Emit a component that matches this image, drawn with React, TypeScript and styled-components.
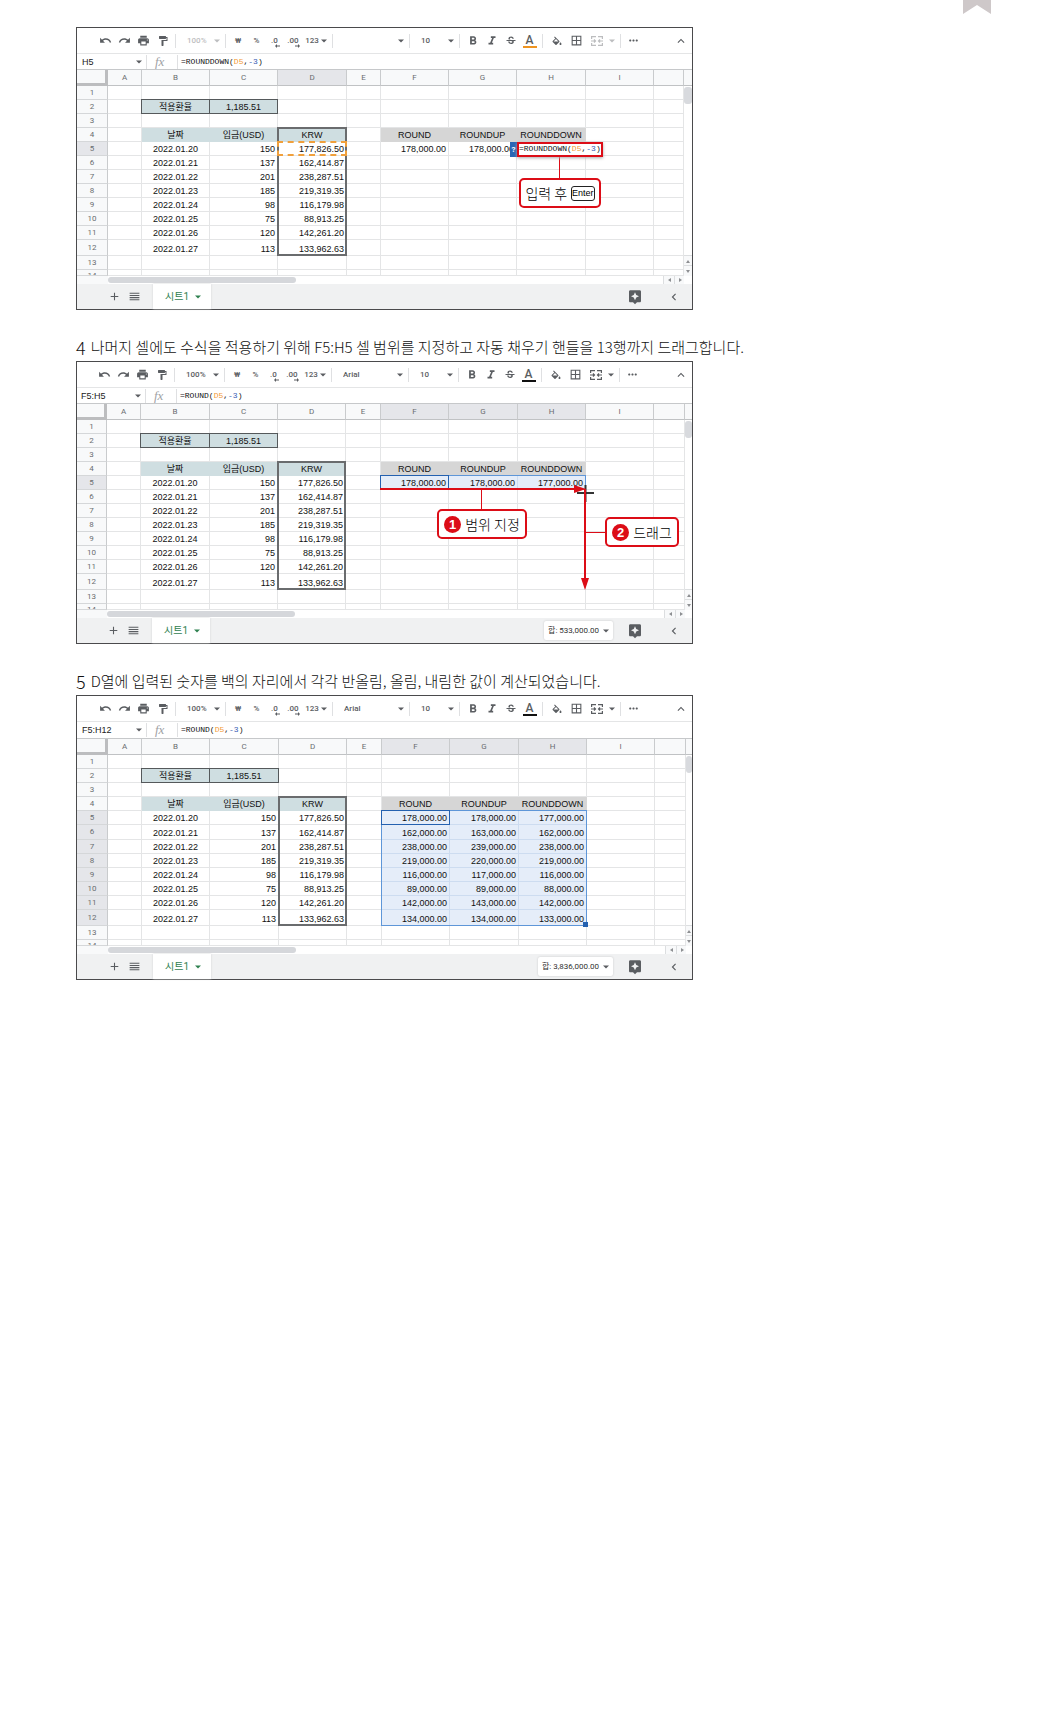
import React from 'react';
import styled, { createGlobalStyle } from 'styled-components';
import {
  MdUndo, MdRedo, MdPrint, MdFormatPaint, MdFormatBold, MdFormatItalic, MdStrikethroughS,
  MdBorderAll, MdMoreHoriz, MdExpandLess, MdAdd, MdReorder, MdChevronLeft, MdAssistant,
} from 'react-icons/md';

const SANS = '"Liberation Sans", "Noto Sans CJK KR", sans-serif';
const UI = 'Roboto, "Noto Sans CJK KR", sans-serif';
const MONO = '"Liberation Mono", monospace';
const RED = '#dc0d17';

const Global = createGlobalStyle`
  *, *::before, *::after { box-sizing: border-box; }
  body { margin: 0; background: #fff; color: #222; font-family: ${SANS}; }
  button, select, input { font: inherit; color: inherit; margin: 0; padding: 0; border: 0; background: none; }
`;

/* ---------- page ---------- */

const PageHeader = styled.header`
  display: flex;
  justify-content: flex-end;
  height: 27px;
  padding-right: 51px;
`;
const Bookmark = styled.button`
  display: block;
  width: 28px;
  height: 14px;
  svg { display: block; }
`;
const Main = styled.main`
  padding: 0 76px 48px;
`;
const Caption = styled.h2`
  display: flex;
  align-items: center;
  gap: 5px;
  height: 51px;
  margin: 0;
  padding-top: 22px;
  font: 300 15px/24px "Noto Sans CJK KR", sans-serif;
  color: #111;
  white-space: nowrap;
`;
const StepNumber = styled.span`
  font-size: 18px;
`;

/* ---------- sheet chrome ---------- */

const Panel = styled.section`
  max-width: 617px;
  border: 1px solid #4a4a4c;
  background: #fff;
`;
const Toolbar = styled.div<{ $inset: number }>`
  display: flex;
  align-items: center;
  height: 26px;
  padding: 0 2px 0 ${p => p.$inset}px;
  border-bottom: 1px solid #e4e5e6;
  font: 500 8px/12px ${UI};
  color: #5a5d61;
`;
const Divider = styled.span`
  width: 1px;
  height: 14px;
  margin: 0 3px;
  background: #dfe0e2;
`;
const ToolButton = styled.button<{ $width?: number; $faded?: boolean }>`
  position: relative;
  display: flex;
  flex: none;
  align-items: center;
  justify-content: center;
  gap: 2px;
  width: ${p => p.$width ?? 19}px;
  height: 20px;
  opacity: ${p => (p.$faded ? 0.4 : 1)};
`;
const MergeButton = styled(ToolButton)`
  justify-content: space-between;
  padding: 0 2px 0 5px;
`;
const DigitArrow = styled.svg`
  position: absolute;
  right: 3px;
  bottom: 3px;
`;
const Picker = styled.label<{ $width: number; $faded?: boolean }>`
  display: flex;
  flex: none;
  align-items: center;
  width: ${p => p.$width}px;
  padding: 0 2px 0 8px;
  opacity: ${p => (p.$faded ? 0.4 : 1)};
  select { flex: 1; min-width: 0; appearance: none; }
`;
const InkButton = styled(ToolButton)<{ $ink: string }>`
  flex-direction: column;
  gap: 0;
  font-size: 12px;
  &::after { content: ""; width: 14px; height: 2px; background: ${p => p.$ink}; }
`;
const Spacer = styled.span`
  flex: 1;
`;
const FormulaBar = styled.div<{ $height: number; $inset: number }>`
  display: flex;
  align-items: center;
  height: ${p => p.$height}px;
  padding-left: ${p => p.$inset}px;
  border-bottom: 1px solid #c6c8ca;
  font: 9px/12px ${SANS};
`;
const NameBox = styled.label`
  display: flex;
  align-items: center;
  width: 61px;
  padding-right: 1px;
  input { flex: 1; min-width: 0; outline: 0; }
`;
const FxMark = styled.span`
  width: 24px;
  padding-left: 5px;
  font: italic 13px/14px "Liberation Serif", serif;
  color: #a0a2a5;
`;
const Code = styled.code`
  font: 8px/12px ${MONO};
  color: #111;
  white-space: nowrap;
`;
const RefToken = styled.span`
  color: #f29b38;
`;
const NumberToken = styled.span`
  color: #3b5fb5;
`;

/* ---------- grid ---------- */

const GridArea = styled.div`
  position: relative;
  display: flex;
`;
const Grid = styled.table`
  flex: 1;
  width: 0;
  table-layout: fixed;
  border-collapse: separate;
  border-spacing: 0;
  font: 9px/11px ${SANS};
  color: #111;
`;
const HeadCell = styled.th<{ $on?: boolean }>`
  height: 16px;
  padding: 0;
  border-right: 1px solid #c9cbcd;
  border-bottom: 1px solid #c0c2c4;
  background: ${p => (p.$on ? '#e5e6ea' : '#f8f9fa')};
  font: 400 8px/14px ${UI};
  color: #6a6d70;
`;
const Corner = styled.td`
  padding: 0;
  border-right: 3px solid #bcbdbf;
  border-bottom: 3px solid #bcbdbf;
  background: #f8f9fa;
`;
const RowHead = styled.th<{ $on?: boolean }>`
  padding: 0;
  border-right: 1px solid #c9cbcd;
  border-bottom: 1px solid #d5d7d9;
  background: ${p => (p.$on ? '#e5e6ea' : '#f8f9fa')};
  font: 400 8px/12px ${UI};
  color: #6a6d70;
`;
type Tone = 'plain' | 'teal' | 'grey' | 'picked';
const toneFill: Record<Tone, string> = { plain: '#fff', teal: '#cfdee1', grey: '#d6d6d6', picked: '#e5edf9' };
const toneLine: Record<Tone, string> = { plain: '#e4e5e6', teal: '#cfdee1', grey: '#d6d6d6', picked: '#cddcf0' };
const Cell = styled.td<{ $tone: Tone; $align: string }>`
  padding: 0 2px;
  border-right: 1px solid ${p => toneLine[p.$tone]};
  border-bottom: 1px solid ${p => toneLine[p.$tone]};
  background: ${p => toneFill[p.$tone]};
  text-align: ${p => p.$align};
  vertical-align: bottom;
  white-space: nowrap;
`;
const Row = styled.tr<{ $height: number }>`
  height: ${p => p.$height}px;
`;
const Clip = styled.div`
  height: 5px;
  overflow: hidden;
  line-height: 11px;
`;
const VScroll = styled.div<{ $width: number }>`
  display: flex;
  flex-direction: column;
  width: ${p => p.$width}px;
  background: #fff;
  &::before { content: ""; height: 16px; background: #f8f9fa; border-bottom: 1px solid #c0c2c4; }
`;
const VThumb = styled.span`
  height: 17px;
  margin-top: 1px;
  border-radius: 3px;
  background: #d8dade;
`;
const StepButton = styled.button<{ $w?: number; $h?: number }>`
  display: flex;
  flex: none;
  align-items: center;
  justify-content: center;
  width: ${p => (p.$w ? p.$w + 'px' : '100%')};
  height: ${p => (p.$h ? p.$h + 'px' : '100%')};
  border: 0 solid #dcdee0;
  border-width: ${p => (p.$h ? '1px 0 0' : '0 0 0 1px')};
  background: #f8f9fa;
`;
const HScroll = styled.div<{ $lead: number; $trail: number }>`
  display: flex;
  align-items: center;
  height: 8px;
  padding-right: ${p => p.$trail}px;
  background: linear-gradient(#f8f9fa, #f8f9fa) left / ${p => p.$lead}px 100% no-repeat, #fff;
  padding-left: ${p => p.$lead}px;
`;
const HThumb = styled.span`
  width: 188px;
  height: 6px;
  border-radius: 3px;
  background: #d5d7db;
`;
const Footer = styled.footer<{ $inset: number }>`
  display: flex;
  align-items: center;
  height: 25px;
  padding: 0 8px 0 ${p => p.$inset}px;
  background: #f0f1f2;
  color: #5a5d61;
`;
const FootButton = styled.button`
  display: flex;
  align-items: center;
  justify-content: center;
  width: 20px;
  height: 20px;
`;
const SheetTab = styled.button`
  display: flex;
  align-items: center;
  justify-content: center;
  gap: 6px;
  width: 58px;
  height: 25px;
  margin-left: 9px;
  padding-left: 2px;
  background: #fff;
  box-shadow: 0 0 2px #d0d2d4;
  font: 400 10px/14px ${UI};
  color: #2f8150;
`;
const SumButton = styled.button`
  display: flex;
  align-items: center;
  gap: 4px;
  height: 19px;
  margin-right: 12px;
  padding: 0 4px;
  border-radius: 2px;
  background: #fff;
  box-shadow: 0 0 2px #c2c4c6;
  font: 8px/12px ${UI};
  color: #333;
`;
const ExploreButton = styled(FootButton)`
  margin-right: 19px;
`;

/* ---------- things drawn over the grid ---------- */

const RangeBox = styled.div<{ $line: string }>`
  position: absolute;
  border: ${p => p.$line};
  pointer-events: none;
`;
const FillHandle = styled.span`
  position: absolute;
  right: -2px;
  bottom: -2px;
  width: 5px;
  height: 5px;
  background: #2461b0;
`;
const Editor = styled.div`
  position: absolute;
  left: 440px;
  top: 72px;
  display: flex;
  align-items: center;
  width: 86px;
  height: 15px;
  padding-bottom: 2px;
  border: 2px solid ${RED};
  background: #fff;
  box-shadow: 0 1px 3px #aaa;
`;
const HelpBadge = styled.button`
  position: absolute;
  left: 433px;
  top: 72px;
  width: 7px;
  height: 15px;
  background: #2a66b4;
  color: #fff;
  font: 700 8px/15px ${UI};
`;
const Callout = styled.div<{ $x: number; $y: number; $width: number }>`
  position: absolute;
  left: ${p => p.$x}px;
  top: ${p => p.$y}px;
  display: flex;
  align-items: center;
  justify-content: center;
  gap: 4px;
  width: ${p => p.$width}px;
  height: 30px;
  border: 2px solid ${RED};
  border-radius: 5px;
  background: #fff;
  font: 300 14px/20px "Noto Sans CJK KR", sans-serif;
  color: #000;
  white-space: nowrap;
`;
const KeyCap = styled.kbd`
  height: 15px;
  border: 1px solid #222;
  border-radius: 3px;
  font: 9px/13px ${SANS};
`;
const Bullet = styled.span`
  width: 17px;
  height: 17px;
  border-radius: 50%;
  background: ${RED};
  color: #fff;
  font: 700 13px/17px ${SANS};
  text-align: center;
`;
const Lines = styled.svg`
  position: absolute;
  left: 0;
  top: 0;
  overflow: visible;
  pointer-events: none;
`;

/* ---------- small drawings ---------- */

const Caret = ({ color = '#5a5d61' }: { color?: string }) => (
  <svg width="6" height="4" viewBox="0 0 6 4" aria-hidden="true"><path d="M0 .5h6L3 3.5z" fill={color} /></svg>
);
const stepPaths = { up: 'M0 4h4L2 1z', down: 'M0 1h4L2 4z', left: 'M4 0v4L1 2z', right: 'M1 0v4l3-2z' };
const StepArrow = ({ to }: { to: keyof typeof stepPaths }) => (
  <svg width="4" height="4" viewBox="0 0 4 4" aria-hidden="true"><path d={stepPaths[to]} fill="#8d8f92" /></svg>
);
const MergeIcon = () => (
  <svg width="12" height="10" viewBox="0 0 12 10" fill="none" stroke="currentColor" strokeWidth="1.2" aria-hidden="true">
    <path d="M.6 3V.6H5M7 .6h4.400V3M.6 7v2.400H5M7 9.400h4.400V7M0 5h4M12 5H8M3 3.500 4.500 5 3 6.500M9 3.500 7.500 5 9 6.500" />
  </svg>
);
const BucketIcon = () => (
  <svg width="12" height="12" viewBox="0 -3 24 24" fill="currentColor" aria-hidden="true">
    <path d="M16.56 8.94L7.62 0 6.21 1.41l2.38 2.38-5.15 5.15c-.59.59-.59 1.54 0 2.12l5.5 5.5c.29.29.68.44 1.06.44s.77-.15 1.06-.44l5.5-5.5c.59-.58.59-1.53 0-2.12zM5.21 10L10 5.21 14.79 10H5.21zM19 11.5s-2 2.17-2 3.5c0 1.1.9 2 2 2s2-.9 2-2c0-1.33-2-3.5-2-3.5z" />
  </svg>
);

/* ---------- data ---------- */

const letters = ['A', 'B', 'C', 'D', 'E', 'F', 'G', 'H', 'I', ''];
const deposits = [
  ['2022.01.20', '150', '177,826.50'],
  ['2022.01.21', '137', '162,414.87'],
  ['2022.01.22', '201', '238,287.51'],
  ['2022.01.23', '185', '219,319.35'],
  ['2022.01.24', '98', '116,179.98'],
  ['2022.01.25', '75', '88,913.25'],
  ['2022.01.26', '120', '142,261.20'],
  ['2022.01.27', '113', '133,962.63'],
];
const rounded = [
  ['178,000.00', '178,000.00', '177,000.00'],
  ['162,000.00', '163,000.00', '162,000.00'],
  ['238,000.00', '239,000.00', '238,000.00'],
  ['219,000.00', '220,000.00', '219,000.00'],
  ['116,000.00', '117,000.00', '116,000.00'],
  ['89,000.00', '89,000.00', '88,000.00'],
  ['142,000.00', '143,000.00', '142,000.00'],
  ['134,000.00', '134,000.00', '133,000.00'],
];

interface SheetSpec {
  label: string;
  name: string;
  fn: string;
  editing?: boolean;
  ink: string;
  inset: number;
  formulaHeight: number;
  cols: number[];
  rows: number[];
  scroll: number;
  results: string[][];
  headOn: string[];
  rowsOn: number[];
  picked: boolean;
  sum?: string;
}

const rowSet = (sixth: number) => [14, 14, 14, 14, 14, sixth, 14, 14, 14, 14, 14, 16, 14, 6];

const sheets: SheetSpec[] = [
  {
    label: 'ROUNDDOWN', name: 'H5', fn: 'ROUNDDOWN', editing: true, ink: '#ee9420', inset: 19, formulaHeight: 16,
    cols: [31, 34, 68, 68, 69, 34, 68, 68, 69, 68], rows: rowSet(14), scroll: 8,
    results: [['178,000.00', '178,000.00', '']], headOn: ['D'], rowsOn: [5], picked: false,
  },
  {
    label: 'F5:H5', name: 'F5:H5', fn: 'ROUND', ink: '#111', inset: 18, formulaHeight: 16,
    cols: [30, 34, 69, 68, 68, 35, 68, 69, 68, 68], rows: rowSet(14), scroll: 7,
    results: rounded.slice(0, 1), headOn: ['F', 'G', 'H'], rowsOn: [5], picked: true, sum: '합: 533,000.00',
  },
  {
    label: 'F5:H12', name: 'F5:H12', fn: 'ROUND', ink: '#111', inset: 19, formulaHeight: 17,
    cols: [31, 34, 68, 69, 68, 35, 68, 69, 68, 68], rows: rowSet(15), scroll: 6,
    results: rounded, headOn: ['F', 'G', 'H'], rowsOn: [5, 6, 7, 8, 9, 10, 11, 12], picked: true, sum: '합: 3,836,000.00',
  },
];

const total = (list: number[]) => list.reduce((a, b) => a + b, 0);

/* Rectangle on the grid lines around a block of cells; column 1 is A, row 1 is the first row. */
function around(s: SheetSpec, c1: number, r1: number, c2: number, r2: number): React.CSSProperties {
  const left = total(s.cols.slice(0, c1)) - 1;
  const top = 16 + total(s.rows.slice(0, r1 - 1)) - 1;
  return {
    left, top,
    width: total(s.cols.slice(0, c2 + 1)) - left,
    height: 16 + total(s.rows.slice(0, r2)) - top,
  };
}

function cellAt(s: SheetSpec, row: number, col: string): { text: string; tone: Tone; align: string } {
  const blank = { text: '', tone: 'plain' as Tone, align: 'left' };
  if (row === 2 && col === 'B') return { text: '적용환율', tone: 'teal', align: 'center' };
  if (row === 2 && col === 'C') return { text: '1,185.51', tone: 'teal', align: 'center' };
  const left = 'BCD'.indexOf(col || '-');
  const right = 'FGH'.indexOf(col || '-');
  if (row === 4) {
    if (left >= 0) return { text: ['날짜', '입금(USD)', 'KRW'][left], tone: 'teal', align: 'center' };
    if (right >= 0) return { text: ['ROUND', 'ROUNDUP', 'ROUNDDOWN'][right], tone: 'grey', align: 'center' };
  }
  if (row >= 5 && row <= 12) {
    if (left >= 0) return { text: deposits[row - 5][left], tone: 'plain', align: left === 0 ? 'center' : 'right' };
    const result = s.results[row - 5];
    if (right >= 0 && result) return { text: result[right], tone: s.picked ? 'picked' : 'plain', align: 'right' };
  }
  return blank;
}

/* ---------- components ---------- */

const Formula = ({ fn }: { fn: string }) => (
  <Code>={fn}(<RefToken>D5</RefToken>,<NumberToken>-3</NumberToken>)</Code>
);

const Tools = ({ s }: { s: SheetSpec }) => (
  <Toolbar $inset={s.inset} role="toolbar" aria-label={s.label}>
    <ToolButton aria-label="실행취소"><MdUndo size={13} /></ToolButton>
    <ToolButton aria-label="재실행"><MdRedo size={13} /></ToolButton>
    <ToolButton aria-label="인쇄"><MdPrint size={13} /></ToolButton>
    <ToolButton aria-label="서식 복사"><MdFormatPaint size={12} /></ToolButton>
    <Divider />
    <Picker $width={43} $faded={s.editing}>
      <select aria-label="확대/축소"><option>100%</option></select><Caret />
    </Picker>
    <Divider />
    <ToolButton $width={18} aria-label="통화 형식">₩</ToolButton>
    <ToolButton aria-label="퍼센트 형식">%</ToolButton>
    <ToolButton $width={17} aria-label="소수점 줄이기">.0
      <DigitArrow width="5" height="4" viewBox="0 0 5 4"><path d="M0 2 2 0v1.500h3v1H2V4z" fill="currentColor" /></DigitArrow>
    </ToolButton>
    <ToolButton $width={20} aria-label="소수점 늘리기">.00
      <DigitArrow width="5" height="4" viewBox="0 0 5 4"><path d="M5 2 3 0v1.500H0v1h3V4z" fill="currentColor" /></DigitArrow>
    </ToolButton>
    <ToolButton $width={26} aria-label="서식 더보기">123<Caret /></ToolButton>
    <Divider />
    <Picker $width={70}>
      <select aria-label="글꼴"><option>{s.editing ? '' : 'Arial'}</option></select><Caret />
    </Picker>
    <Divider />
    <Picker $width={43}>
      <select aria-label="글꼴 크기"><option>10</option></select><Caret />
    </Picker>
    <Divider />
    <ToolButton aria-label="굵게"><MdFormatBold size={14} /></ToolButton>
    <ToolButton aria-label="기울임꼴"><MdFormatItalic size={14} /></ToolButton>
    <ToolButton aria-label="취소선"><MdStrikethroughS size={12} /></ToolButton>
    <InkButton $ink={s.ink} aria-label="텍스트 색상">A</InkButton>
    <Divider />
    <ToolButton $width={21} aria-label="채우기 색상"><BucketIcon /></ToolButton>
    <ToolButton aria-label="테두리"><MdBorderAll size={13} /></ToolButton>
    <MergeButton $width={31} $faded={s.editing} aria-label="셀 병합"><MergeIcon /><Caret /></MergeButton>
    <Divider />
    <ToolButton aria-label="더보기"><MdMoreHoriz size={13} /></ToolButton>
    <Spacer />
    <ToolButton aria-label="메뉴 숨기기"><MdExpandLess size={14} /></ToolButton>
  </Toolbar>
);

const Sheet = ({ s, children }: { s: SheetSpec; children?: React.ReactNode }) => (
  <Panel>
    <Tools s={s} />
    <FormulaBar $height={s.formulaHeight} $inset={s.inset - 14}>
      <NameBox><input aria-label="이름 상자" defaultValue={s.name} /><Caret /></NameBox>
      <Divider />
      <FxMark>fx</FxMark>
      <Divider />
      <Formula fn={s.fn} />
    </FormulaBar>
    <GridArea>
      <Grid>
        <colgroup>
          {s.cols.map((w, i) => <col key={i} style={{ width: w }} />)}
          <col />
        </colgroup>
        <thead>
          <tr>
            <Corner />
            {letters.map(l => <HeadCell key={l} scope="col" $on={s.headOn.includes(l)}>{l}</HeadCell>)}
          </tr>
        </thead>
        <tbody>
          {s.rows.map((h, i) => {
            const last = i === s.rows.length - 1;
            return (
              <Row key={i} $height={h}>
                <RowHead scope="row" $on={s.rowsOn.includes(i + 1)}>{last ? <Clip>{i + 1}</Clip> : i + 1}</RowHead>
                {letters.map(l => {
                  const c = cellAt(s, i + 1, l);
                  return <Cell key={l} $tone={c.tone} $align={c.align}>{c.text}</Cell>;
                })}
              </Row>
            );
          })}
        </tbody>
      </Grid>
      <VScroll $width={s.scroll}>
        <VThumb />
        <Spacer />
        <StepButton $h={10} aria-label="위로"><StepArrow to="up" /></StepButton>
        <StepButton $h={11} aria-label="아래로"><StepArrow to="down" /></StepButton>
      </VScroll>
      <RangeBox $line="1px solid #55595b" style={around(s, 2, 2, 2, 2)} />
      <RangeBox $line="1px solid #55595b" style={around(s, 3, 2, 3, 2)} />
      <RangeBox $line="2px solid #6a6c6e" style={around(s, 4, 4, 4, 12)} />
      {children}
    </GridArea>
    <HScroll $lead={s.cols[0]} $trail={s.scroll}>
      <HThumb />
      <Spacer />
      <StepButton $w={11} aria-label="왼쪽으로"><StepArrow to="left" /></StepButton>
      <StepButton $w={10} aria-label="오른쪽으로"><StepArrow to="right" /></StepButton>
    </HScroll>
    <Footer $inset={s.inset + 8}>
      <FootButton aria-label="시트 추가"><MdAdd size={13} /></FootButton>
      <FootButton aria-label="모든 시트"><MdReorder size={13} /></FootButton>
      <SheetTab>시트1<Caret color="#2f8150" /></SheetTab>
      <Spacer />
      {s.sum && <SumButton>{s.sum}<Caret /></SumButton>}
      <ExploreButton aria-label="탐색"><MdAssistant size={16} /></ExploreButton>
      <FootButton aria-label="측면 패널 표시"><MdChevronLeft size={14} /></FootButton>
    </Footer>
  </Panel>
);

export default function App() {
  const [first, second, third] = sheets;
  return (
    <>
      <Global />
      <PageHeader>
        <Bookmark aria-label="책갈피">
          <svg width="28" height="14" viewBox="0 0 28 14"><path d="M0 0h28v14L14 5 0 14z" fill="#cec8c9" /></svg>
        </Bookmark>
      </PageHeader>
      <Main>
        <Sheet s={first}>
          <RangeBox $line="2px dashed #f0a03c" style={around(first, 4, 5, 4, 5)} />
          <Lines width="1" height="1"><path d="M482.500 86v23" stroke={RED} /></Lines>
          <HelpBadge aria-label="도움말">?</HelpBadge>
          <Editor><Formula fn="ROUNDDOWN" /></Editor>
          <Callout $x={442} $y={108} $width={82}>입력 후 <KeyCap>Enter</KeyCap></Callout>
        </Sheet>

        <Caption><StepNumber>4</StepNumber>나머지 셀에도 수식을 적용하기 위해 F5:H5 셀 범위를 지정하고 자동 채우기 핸들을 13행까지 드래그합니다.</Caption>
        <Sheet s={second}>
          <RangeBox $line="1px solid #5e96d8" style={around(second, 6, 5, 8, 5)} />
          <RangeBox $line="1px solid #2461b0" style={around(second, 6, 5, 6, 5)} />
          <Lines width="1" height="1">
            <path d="M500 89h17M508.500 81v17" stroke="#333" strokeWidth="2" />
            <path d="M303 85h196M508 85v91" stroke={RED} strokeWidth="2" />
            <path d="M404.500 85v20M508 128.500h21" stroke={RED} />
            <path d="M497 81v8l12-4zM504 174h8l-4 12z" fill={RED} />
          </Lines>
          <Callout $x={360} $y={105} $width={90}><Bullet>1</Bullet>범위 지정</Callout>
          <Callout $x={528} $y={113} $width={74}><Bullet>2</Bullet>드래그</Callout>
        </Sheet>

        <Caption><StepNumber>5</StepNumber>D열에 입력된 숫자를 백의 자리에서 각각 반올림, 올림, 내림한 값이 계산되었습니다.</Caption>
        <Sheet s={third}>
          <RangeBox $line="1px solid #5e96d8" style={around(third, 6, 5, 8, 12)}><FillHandle /></RangeBox>
          <RangeBox $line="1px solid #2461b0" style={around(third, 6, 5, 6, 5)} />
        </Sheet>
      </Main>
    </>
  );
}
